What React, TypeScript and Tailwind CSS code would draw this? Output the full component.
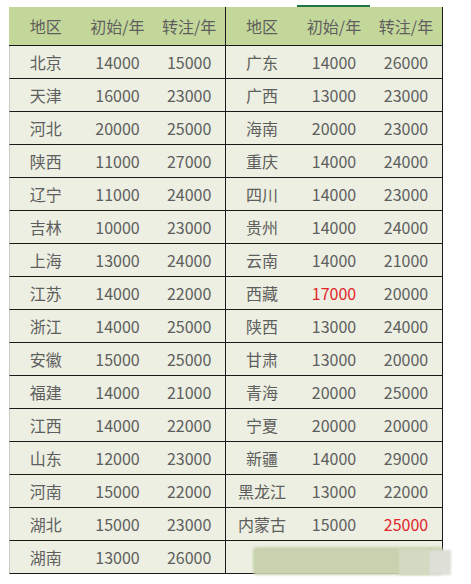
type Cell = { v: string; red?: boolean };
type Row = [string, Cell, Cell];

const c = (v: string, red = false): Cell => ({ v, red });

const left: Row[] = [
  ['北京', c('14000'), c('15000')],
  ['天津', c('16000'), c('23000')],
  ['河北', c('20000'), c('25000')],
  ['陕西', c('11000'), c('27000')],
  ['辽宁', c('11000'), c('24000')],
  ['吉林', c('10000'), c('23000')],
  ['上海', c('13000'), c('24000')],
  ['江苏', c('14000'), c('22000')],
  ['浙江', c('14000'), c('25000')],
  ['安徽', c('15000'), c('25000')],
  ['福建', c('14000'), c('21000')],
  ['江西', c('14000'), c('22000')],
  ['山东', c('12000'), c('23000')],
  ['河南', c('15000'), c('22000')],
  ['湖北', c('15000'), c('23000')],
  ['湖南', c('13000'), c('26000')],
];

const right: (Row | null)[] = [
  ['广东', c('14000'), c('26000')],
  ['广西', c('13000'), c('23000')],
  ['海南', c('20000'), c('23000')],
  ['重庆', c('14000'), c('24000')],
  ['四川', c('14000'), c('23000')],
  ['贵州', c('14000'), c('24000')],
  ['云南', c('14000'), c('21000')],
  ['西藏', c('17000', true), c('20000')],
  ['陕西', c('13000'), c('24000')],
  ['甘肃', c('13000'), c('20000')],
  ['青海', c('20000'), c('25000')],
  ['宁夏', c('20000'), c('20000')],
  ['新疆', c('14000'), c('29000')],
  ['黑龙江', c('13000'), c('22000')],
  ['内蒙古', c('15000'), c('25000', true)],
  null,
];

function Half({ row, className }: { row: Row | null; className: string }) {
  return (
    <div className={`grid grid-cols-3 items-center ${className}`}>
      {row ? (
        <>
          <span className="text-center">{row[0]}</span>
          {[row[1], row[2]].map((cell, i) => (
            <span key={i} className={`text-center ${cell.red ? 'text-[#e2252b]' : ''}`}>
              {cell.v}
            </span>
          ))}
        </>
      ) : null}
    </div>
  );
}

function HeaderHalf({ className }: { className: string }) {
  return (
    <div className={`grid grid-cols-3 items-center ${className}`}>
      <span className="text-center">地区</span>
      <span className="text-center">初始/年</span>
      <span className="text-center">转注/年</span>
    </div>
  );
}

export default function App() {
  return (
    <div
      className="min-h-[584px] bg-white pl-[9px] pt-[5px] text-[16px] text-[#5e5e5e]"
      style={{ fontFamily: '"Noto Sans CJK SC", "Noto Sans", sans-serif' }}
    >
      <div className="ml-[288px] h-[2px] w-[73px] bg-[#217346]" />
      <div className="relative w-[434px]">
        <div className="flex h-[39px] border-b border-r border-[#1a1a1a] bg-[#c4d79b]">
          <HeaderHalf className="w-[217px] border-r border-[#1a1a1a] pl-px" />
          <HeaderHalf className="w-[216px]" />
        </div>
        {left.map((row, i) => (
          <div
            key={i}
            className="flex h-[33px] border-b border-l border-r border-b-[#1a1a1a] border-l-[#c9ccc0] border-r-[#1a1a1a] bg-[#ecefe1]"
          >
            <Half row={row} className="w-[216px] border-r border-[#1a1a1a]" />
            <Half row={right[i]} className="w-[216px]" />
          </div>
        ))}
        {/* smudged-out watermark in the last cell */}
        <div className="pointer-events-none absolute left-[244px] top-[540px] z-10 h-[28px] w-[190px] rounded-sm bg-[#c8d2ae] blur-[1px]" />
        <div className="pointer-events-none absolute left-[390px] top-[542px] z-10 h-[26px] w-[30px] bg-[#d3dac1] blur-[1px]" />
        <div className="pointer-events-none absolute left-[420px] top-[543px] z-10 h-[25px] w-[22px] bg-[#dedfd7] blur-[1px]" />
      </div>
    </div>
  );
}
